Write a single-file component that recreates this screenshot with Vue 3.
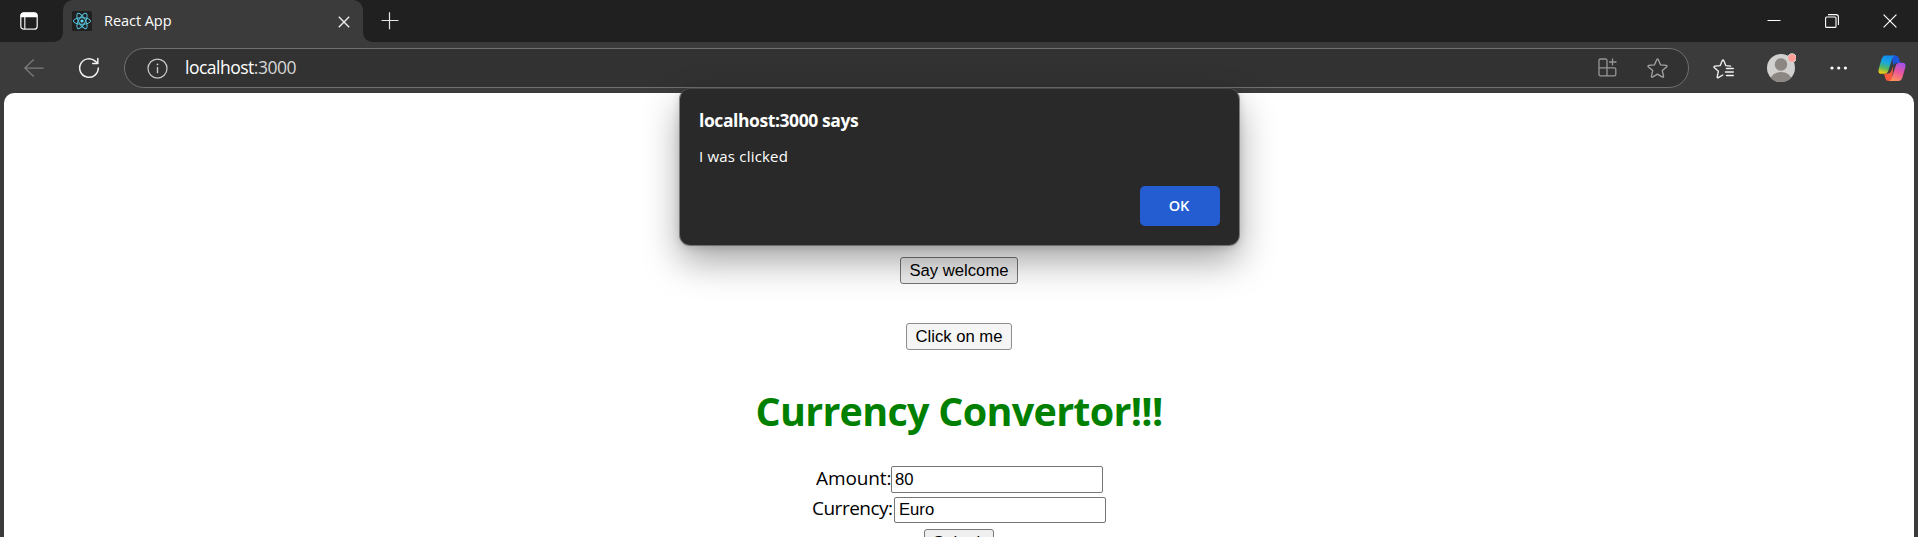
<script setup>
import { ref } from 'vue'

const host = 'localhost'
const port = ':3000'
const amount = ref('80')
const currency = ref('Euro')
</script>

<template>
  <div class="window">
    <header class="titlebar">
      <svg class="workspaces" width="18" height="18" viewBox="0 0 18 18" fill="none">
        <rect x=".8" y=".8" width="16.4" height="16.4" rx="3" stroke="#ececec" stroke-width="1.3" />
        <path d="M.6 5.3V3.6a3 3 0 0 1 3-3h10.8a3 3 0 0 1 3 3v1.7z" fill="#fff" />
        <path d="M4.8 5v12" stroke="#ececec" stroke-width="1.2" />
      </svg>
      <div class="tab">
        <svg class="favicon" width="20" height="20" viewBox="0 0 20 20" fill="none">
          <rect width="20" height="20" rx="1.5" fill="#202020" />
          <g stroke="#55c3de" stroke-width="1">
            <ellipse cx="10" cy="10" rx="8.6" ry="3.3" />
            <ellipse cx="10" cy="10" rx="8.6" ry="3.3" transform="rotate(60 10 10)" />
            <ellipse cx="10" cy="10" rx="8.6" ry="3.3" transform="rotate(120 10 10)" />
          </g>
          <circle cx="10" cy="10" r="1.6" fill="#61dafb" />
        </svg>
        <span class="tab-title">React App</span>
        <svg class="tab-close" width="12" height="12" viewBox="0 0 12 12" stroke="#f0f0f0" stroke-width="1.35">
          <path d="M.8.8l10.4 10.4M11.2.8L.8 11.2" />
        </svg>
      </div>
      <svg class="new-tab" width="18" height="18" viewBox="0 0 18 18" stroke="#e6e6e6" stroke-width="1.2">
        <path d="M.5 8.5h17M8.5.3v17" />
      </svg>
      <div class="controls">
        <svg width="14" height="14" viewBox="0 0 14 14" stroke="#fff"><path d="M.5 6.5h13" /></svg>
        <svg width="14" height="14" viewBox="0 0 14 14" stroke="#fff" fill="none" stroke-width="1.1">
          <rect x=".6" y="3" width="10.4" height="10.4" rx="1" />
          <path d="M3 .6h8a2.4 2.4 0 0 1 2.4 2.4v8" />
        </svg>
        <svg width="14" height="14" viewBox="0 0 14 14" stroke="#fff" stroke-width="1.2"><path d="M.6.6l12.8 12.8M13.4.6L.6 13.4" /></svg>
      </div>
    </header>

    <nav class="toolbar">
      <svg class="back" width="20" height="18" viewBox="0 0 20 18" fill="none" stroke="#7c7c7c" stroke-width="1.25" stroke-linecap="round" stroke-linejoin="round">
        <path d="M9.4.8L.9 9l8.5 8.2M1.2 9h18" />
      </svg>
      <svg class="reload" width="22" height="22" viewBox="0 0 22 22" fill="none" stroke="#f2f2f2" stroke-width="1.5" stroke-linecap="round" stroke-linejoin="round">
        <path d="M20.3 11a9.3 9.3 0 1 1-3.1-6.9l2.3 2.2" />
        <path d="M19.8 1.5v5h-5.1" />
      </svg>
      <div class="address">
        <svg class="info" width="21" height="21" viewBox="0 0 21 21" fill="none" stroke="#c9c9c9" stroke-width="1.25">
          <circle cx="10.5" cy="10.5" r="9.5" />
          <path d="M10.5 9v6.2" stroke-width="1.4" />
          <circle cx="10.5" cy="6.4" r=".95" fill="#c9c9c9" stroke="none" />
        </svg>
        <span class="url">{{ host }}<span class="port">{{ port }}</span></span>
        <svg class="apps" width="19" height="19" viewBox="0 0 19 19" fill="none" stroke="#969696" stroke-width="1.3">
          <path d="M9 9.8V2.4A1.4 1.4 0 0 0 7.600 1H2.400A1.400 1.400 0 0 0 1 2.400v14A1.400 1.400 0 0 0 2.400 17.800h14a1.400 1.400 0 0 0 1.400-1.400v-5.200a1.400 1.400 0 0 0-1.400-1.400H1M9 9.800V18M14.500.5v7M11 4h7.500" />
        </svg>
        <svg class="star" width="21" height="21" viewBox="0 0 21 21" fill="none" stroke="#a4a4a4" stroke-width="1.3" stroke-linejoin="round">
          <path d="M9.800 1.500q.7-1 1.400 0l2.300 5.300 5.800.6q1.200.4.500 1.300l-4.500 3.900 1.300 5.700q0 1.200-1.100.8l-5-3-5 3q-1.100.4-1.100-.8l1.300-5.700L1.200 8.700Q.5 7.800 1.700 7.400l5.800-.6z" />
        </svg>
      </div>
      <svg class="favorites" width="21" height="20" viewBox="0 0 21 20" fill="none" stroke="#f2f2f2" stroke-width="1.35" stroke-linejoin="round" stroke-linecap="round">
        <path d="M17.600 7.100l-4.700-.4-2.200-5.200q-.7-1-1.400 0L7.100 6.700l-5.400.5q-1.200.4-.5 1.300l4.200 3.700-1.200 5.700q0 1.100 1.100.8l4.500-2.700" />
        <path d="M13.500 9.500h6.800M12.500 13h7.800M13.500 16.500h6.800" />
      </svg>
      <div class="profile">
        <svg width="30" height="30" viewBox="0 0 30 30">
          <defs><clipPath id="face"><circle cx="15" cy="15" r="14" /></clipPath></defs>
          <circle cx="15" cy="15" r="14" fill="#d2d0ce" />
          <g clip-path="url(#face)" fill="#8c8783">
            <circle cx="15" cy="11.500" r="6.200" />
            <ellipse cx="15" cy="27" rx="10.500" ry="8" />
          </g>
          <circle cx="26" cy="5" r="4.300" fill="#ff9f98" stroke="#d6d6d6" />
        </svg>
      </div>
      <svg class="more" width="18" height="4" viewBox="0 0 18 4" fill="#fff">
        <circle cx="2" cy="2" r="1.6" /><circle cx="8.700" cy="2" r="1.6" /><circle cx="15.400" cy="2" r="1.6" />
      </svg>
      <svg class="copilot" width="28" height="27" viewBox="0 0 28 27">
        <defs>
          <linearGradient id="cool" x1=".6" y1="0" x2=".35" y2="1">
            <stop offset="0" stop-color="#1488ee" /><stop offset=".4" stop-color="#18a8df" />
            <stop offset=".7" stop-color="#54b760" /><stop offset="1" stop-color="#f2cc12" />
          </linearGradient>
          <linearGradient id="warm" x1=".7" y1="0" x2=".3" y2="1">
            <stop offset="0" stop-color="#a350ea" /><stop offset=".5" stop-color="#ec579b" />
            <stop offset="1" stop-color="#ff9358" />
          </linearGradient>
        </defs>
        <path d="M14 .5h3.500q2.500 0 3.300 2.500l1.500 5h-4q-2.500 0-3.300 2.500z" fill="#1e55dd" />
        <path d="M14 26H10.500Q8 26 7.400 23.500L6 18.500h4q2.500 0 3.300-2.500l2-5z" fill="#f5593e" />
        <path d="M7.500.5H17q-2 .3-2.800 3l-4 12.500q-.9 2.800-4 2.800H3.500Q-.4 18.800.7 14L3.600 4Q4.800.5 7.500.5z" fill="url(#cool)" />
        <path d="M20.500 26H11q2-.3 2.800-3l4-12.500q.9-2.800 4-2.800h2.700q3.900 0 2.800 4.800l-2.900 10Q23.200 26 20.500 26z" fill="url(#warm)" />
      </svg>
    </nav>

    <main class="page">
      <button class="btn welcome">Say welcome</button>
      <button class="btn click">Click on me</button>
      <h1>Currency Convertor!!!</h1>
      <form @submit.prevent>
        <div class="row"><label class="amount-label" for="amount">Amount:</label><input id="amount" v-model="amount" type="text" /></div>
        <div class="row second"><label class="currency-label" for="currency">Currency:</label><input id="currency" v-model="currency" type="text" /></div>
        <button class="btn submit">Submit</button>
      </form>
    </main>

    <section class="dialog" role="alertdialog">
      <h2>{{ host }}{{ port }} says</h2>
      <p>I was clicked</p>
      <button class="ok">OK</button>
    </section>
  </div>
</template>

<style>
body { background: #3b3b3b; overflow: hidden; }
</style>

<style scoped>
* { box-sizing: border-box; }
.window {
  position: relative;
  width: 1918px;
  height: 537px;
  overflow: hidden;
  background: #3b3b3b;
  font-family: "Open Sans", "Noto Sans", sans-serif;
}
svg { display: block; flex: none; }
.titlebar {
  display: flex;
  height: 42px;
  background: #202020;
}
.workspaces { margin: 12px 25px 0 20px; }
.tab {
  position: relative;
  display: flex;
  width: 300px;
  height: 42px;
  padding: 11px 13px 0 9px;
  border-radius: 10px 10px 0 0;
  background: #3b3b3b;
}
.tab::before, .tab::after {
  content: "";
  position: absolute;
  bottom: 0;
  width: 9px;
  height: 9px;
}
.tab::before { left: -9px; background: radial-gradient(circle at 0 0, #202020 8.5px, #3b3b3b 9px); }
.tab::after { right: -9px; background: radial-gradient(circle at 100% 0, #202020 8.5px, #3b3b3b 9px); }
.tab-title {
  flex: 1;
  margin-left: 12px;
  color: #fff;
  font-size: 14.5px;
  line-height: 19px;
  letter-spacing: -0.05px;
}
.tab-close { margin-top: 5px; }
.new-tab { margin: 12px 0 0 18px; }
.controls { display: flex; gap: 44px; margin: 14px 21px 0 auto; }
.toolbar {
  display: flex;
  align-items: flex-start;
  height: 51px;
}
.back { margin: 17px 0 0 24px; }
.reload { margin: 15px 0 0 34px; }
.address {
  display: flex;
  width: 1565px;
  height: 40px;
  margin: 6px 0 0 24px;
  padding: 0 20px 0 22px;
  border: 1px solid #707070;
  border-radius: 20px;
  background: #323232;
}
.info { margin-top: 9px; }
.url {
  flex: 1;
  margin-left: 17px;
  color: #fff;
  font-size: 17.5px;
  line-height: 37px;
  letter-spacing: -0.5px;
}
.port { color: #d6d6d6; }
.apps { margin-top: 9px; }
.star { margin: 9px 0 0 30px; }
.favorites { margin: 17px 0 0 24px; }
.profile { margin: 11px 0 0 32px; }
.more { margin: 24px 0 0 34px; }
.copilot { margin: 13px 0 0 30px; }
.page {
  display: flex;
  flex-direction: column;
  align-items: center;
  width: 1910px;
  height: 444px;
  margin-left: 4px;
  padding-top: 164px;
  overflow: hidden;
  border-radius: 10px 10px 0 0;
  background: #fff;
}
.btn {
  height: 27px;
  flex: none;
  padding: 0;
  border: 1px solid #767676;
  border-radius: 3px;
  background: #efefef;
  color: #000;
  font: 16.67px/24px "Liberation Sans", Arial, sans-serif;
}
.welcome { width: 118px; }
.click { width: 106px; margin-top: 39px; background: #f5f5f5; border-color: #8d8d8d; }
h1 {
  margin: 33px 0 0;
  height: 56px;
  color: #008000;
  font-size: 39.5px;
  font-weight: 700;
  line-height: 56px;
  letter-spacing: -0.72px;
  white-space: nowrap;
}
form { display: flex; flex-direction: column; align-items: center; margin-top: 27px; }
.row { display: flex; height: 27px; }
.second { height: 26px; margin-top: 4px; }
label {
  display: block;
  color: #000;
  font-size: 19px;
  line-height: 24px;
  white-space: nowrap;
}
.amount-label { width: 76px; letter-spacing: -0.1px; padding-left: 1px; }
.currency-label { width: 82px; letter-spacing: -0.5px; }
.second label { line-height: 22px; }
input {
  width: 212px;
  height: 100%;
  padding: 0 3px;
  border: 1px solid #767676;
  border-radius: 2px;
  background: #fff;
  color: #000;
  font: 16.67px "Liberation Sans", Arial, sans-serif;
  outline: none;
}
.second input { padding: 0 4px; }
.submit { width: 70px; margin-top: 6px; }
.dialog {
  position: absolute;
  top: 89px;
  left: 680px;
  width: 559px;
  height: 156px;
  padding: 19px 19px 19px;
  border-radius: 10px;
  background: #292929;
  color: #fff;
  display: flex;
  flex-direction: column;
  box-shadow: 0 0 0 1px rgba(80, 80, 80, .65), 0 16px 36px rgba(0, 0, 0, .36), 0 2px 8px rgba(0, 0, 0, .16);
}
h2 { margin: 0; font-size: 17.5px; font-weight: 700; line-height: 24px; letter-spacing: -0.42px; }
p { margin: 14px 0 0; font-size: 15px; line-height: 20px; letter-spacing: 0.2px; }
.ok {
  align-self: flex-end;
  width: 80px;
  height: 40px;
  margin-top: 20px;
  padding: 0 2px 0 0;
  border: 0;
  border-radius: 5px;
  background: #245dd1;
  color: #fff;
  font: 600 14.5px/38px "Open Sans", sans-serif;
}
</style>
